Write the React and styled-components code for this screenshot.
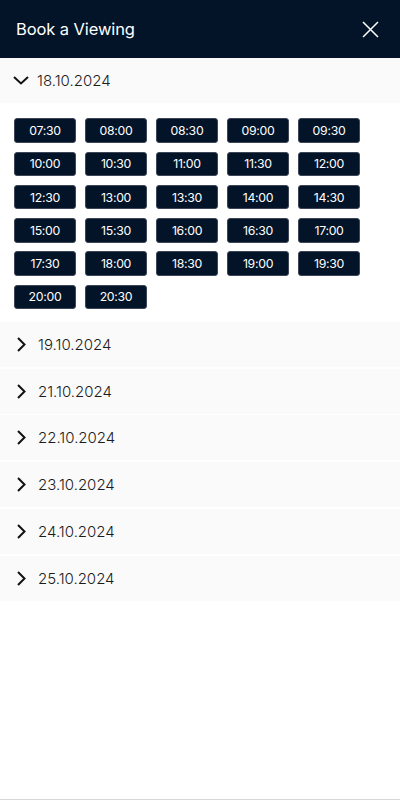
import React, { useState } from 'react';
import styled, { createGlobalStyle } from 'styled-components';

const NAVY = '#031429';

const GlobalStyle = createGlobalStyle`
  html, body {
    margin: 0;
    padding: 0;
    background: #ffffff;
  }
  body {
    font-family: Inter, "Open Sans", "Liberation Sans", sans-serif;
  }
  * {
    box-sizing: border-box;
  }
`;

const Page = styled.div`
  width: 400px;
  min-height: 800px;
  background: #ffffff;
  border-bottom: 1px solid #d8d8d8;
  display: flex;
  flex-direction: column;
`;

const Header = styled.header`
  height: 58px;
  background: ${NAVY};
  display: flex;
  align-items: center;
  justify-content: space-between;
  padding: 0 21px 0 16px;
`;

const Title = styled.h1`
  margin: 0;
  font-size: 16.5px;
  font-weight: 400;
  color: #ffffff;
  letter-spacing: -0.1px;
`;

const CloseButton = styled.button`
  border: none;
  background: none;
  padding: 0;
  width: 17px;
  height: 17px;
  display: flex;
  align-items: center;
  justify-content: center;
  cursor: pointer;
`;

const DateList = styled.div`
  display: flex;
  flex-direction: column;
  gap: 1.75px;
`;

const ItemHeader = styled.button`
  width: 100%;
  height: 45px;
  border: none;
  background: #fafafa;
  display: flex;
  align-items: center;
  gap: ${props => (props.$open ? '8px' : '12px')};
  padding: 0 0 0 ${props => (props.$open ? '13px' : '17px')};
  font-family: inherit;
  font-size: 15px;
  font-weight: 300;
  color: #1c1c1c;
  cursor: pointer;
  text-align: left;
`;

const Slots = styled.div`
  background: #ffffff;
  padding: 13.5px 14px 11px;
  display: grid;
  grid-template-columns: repeat(5, 62px);
  column-gap: 9px;
  row-gap: 8.8px;
`;

const Slot = styled.button`
  height: 24.5px;
  padding: 0;
  border: 1px solid #3c4656;
  border-radius: 3px;
  background: ${NAVY};
  color: #ffffff;
  font-family: inherit;
  font-size: 12.3px;
  font-weight: 400;
  letter-spacing: -0.3px;
  cursor: pointer;
`;

const Chevron = ({ open }) =>
  open ? (
    <svg width="16" height="9" viewBox="0 0 16 9" fill="none">
      <path d="M1 1l7 6.5L15 1" stroke="#111" strokeWidth="2" />
    </svg>
  ) : (
    <svg width="9" height="15" viewBox="0 0 9 15" fill="none">
      <path d="M1 1l6.5 6.5L1 14" stroke="#111" strokeWidth="2" />
    </svg>
  );

const dates = [
  '18.10.2024',
  '19.10.2024',
  '21.10.2024',
  '22.10.2024',
  '23.10.2024',
  '24.10.2024',
  '25.10.2024',
];

const times = [];
for (let h = 7; h <= 20; h++) {
  const hh = String(h).padStart(2, '0');
  if (h > 7) times.push(`${hh}:00`);
  times.push(`${hh}:30`);
}

const App = () => {
  const [open, setOpen] = useState(dates[0]);

  return (
    <Page>
      <GlobalStyle />
      <Header>
        <Title>Book a Viewing</Title>
        <CloseButton aria-label="Close">
          <svg width="17" height="17" viewBox="0 0 17 17" fill="none">
            <path d="M1 1l15 15M16 1L1 16" stroke="#fff" strokeWidth="1.5" />
          </svg>
        </CloseButton>
      </Header>
      <DateList>
        {dates.map(d => {
          const isOpen = open === d;
          return (
            <React.Fragment key={d}>
              <ItemHeader $open={isOpen} onClick={() => setOpen(isOpen ? null : d)}>
                <Chevron open={isOpen} />
                {d}
              </ItemHeader>
              {isOpen && (
                <Slots>
                  {times.map(t => (
                    <Slot key={t}>{t}</Slot>
                  ))}
                </Slots>
              )}
            </React.Fragment>
          );
        })}
      </DateList>
    </Page>
  );
};

export default App;
